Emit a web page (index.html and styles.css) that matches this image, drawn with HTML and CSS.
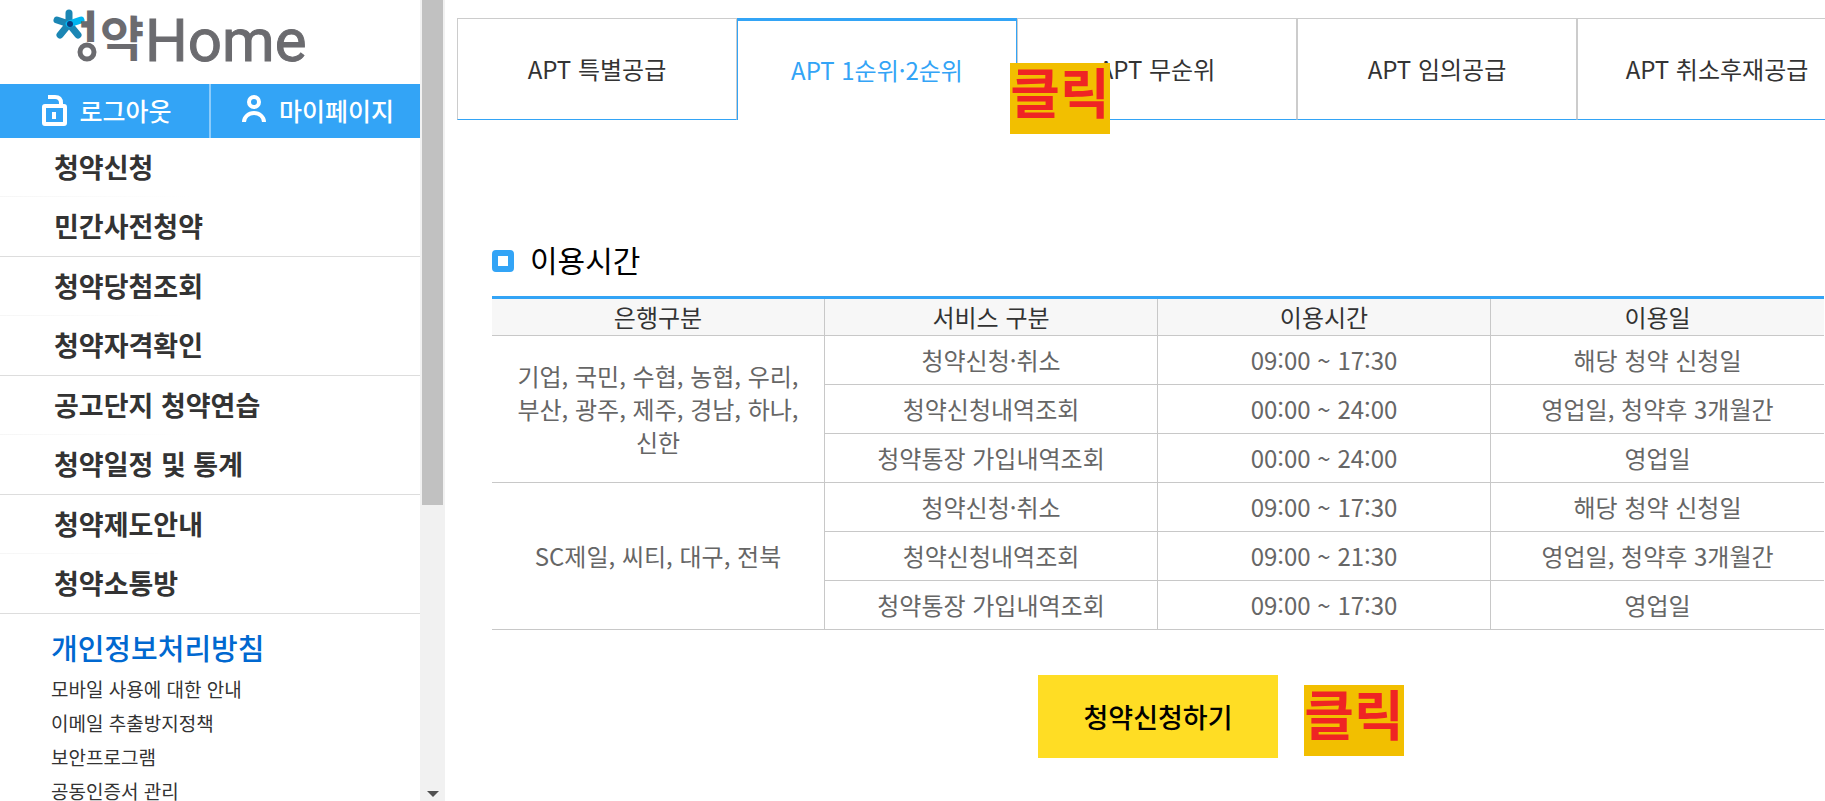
FILE: index.html
```
<!DOCTYPE html>
<html lang="ko">
<head>
    <meta charset="UTF-8">
    <meta name="viewport" content="width=device-width, initial-scale=1.0">
    <title>청약Home</title>
    <link rel="stylesheet" href="styles.css">
</head>
<body>
    <div class="sidebar">
        <a href="#" class="logo" aria-label="청약Home">
            <svg width="270" height="84" viewBox="0 0 270 84">
                <g fill="none" stroke-width="7" stroke-linecap="round">
                    <path stroke="#1b86b4" d="M17 24V13M17 24L5 20M17 24L8 35M17 24L26 35"/>
                    <path stroke="#00b5f0" d="M17 24L29 20"/>
                </g>
                <circle cx="18" cy="24" r="3" fill="#0b3c7d"/>
                <circle cx="35" cy="52" r="7" fill="none" stroke="#6b6b6f" stroke-width="5"/>
                <text class="logo-vowel" x="22" y="37">ㅓ</text>
                <text class="logo-korean" x="48" y="56">약</text>
                <text class="logo-home" x="93" y="61">Home</text>
            </svg>
        </a>
        <div class="user-menu">
            <a href="#">
                <svg width="26" height="32" viewBox="0 0 26 32" fill="none" stroke="#fff" stroke-width="4">
                    <rect x="3" y="12" width="21" height="18" rx="1"/>
                    <path d="M7 3h7q6 0 6 6v3"/>
                    <path d="M13 18v7"/>
                </svg>
                로그아웃
            </a>
            <a href="#">
                <svg width="26" height="32" viewBox="0 0 26 32" fill="none" stroke="#fff" stroke-width="4">
                    <circle cx="13" cy="8" r="5"/>
                    <path d="M3 28a10 9 0 0 1 20 0"/>
                </svg>
                마이페이지
            </a>
        </div>
        <nav>
            <ul class="main-menu">
                <li><a href="#">청약신청</a></li>
                <li><a href="#">민간사전청약</a></li>
                <li><a href="#">청약당첨조회</a></li>
                <li><a href="#">청약자격확인</a></li>
                <li><a href="#">공고단지 청약연습</a></li>
                <li><a href="#">청약일정 및 통계</a></li>
                <li><a href="#">청약제도안내</a></li>
                <li><a href="#">청약소통방</a></li>
            </ul>
        </nav>
        <ul class="policy-menu">
            <li><a href="#" class="privacy">개인정보처리방침</a></li>
            <li><a href="#">모바일 사용에 대한 안내</a></li>
            <li><a href="#">이메일 추출방지정책</a></li>
            <li><a href="#">보안프로그램</a></li>
            <li><a href="#">공동인증서 관리</a></li>
        </ul>
    </div>

    <div class="scrollbar">
        <div class="thumb"></div>
        <svg width="12" height="6" viewBox="0 0 12 6"><path fill="#505050" d="M0 0h12L6 6z"/></svg>
    </div>

    <main>
        <div class="tab-area">
            <ul class="tabs">
                <li><a href="#">APT 특별공급</a></li>
                <li><a href="#" class="active">APT 1순위·2순위</a></li>
                <li><a href="#">APT 무순위</a></li>
                <li><a href="#">APT 임의공급</a></li>
                <li><a href="#">APT 취소후재공급</a></li>
            </ul>
            <span class="click click-tab">클릭</span>
        </div>

        <section>
            <h2>이용시간</h2>
            <table>
                <thead>
                    <tr>
                        <th>은행구분</th>
                        <th>서비스 구분</th>
                        <th>이용시간</th>
                        <th>이용일</th>
                    </tr>
                </thead>
                <tbody>
                    <tr>
                        <td rowspan="3">기업, 국민, 수협, 농협, 우리, 부산, 광주, 제주, 경남, 하나, 신한</td>
                        <td>청약신청·취소</td>
                        <td>09:00 ~ 17:30</td>
                        <td>해당 청약 신청일</td>
                    </tr>
                    <tr>
                        <td>청약신청내역조회</td>
                        <td>00:00 ~ 24:00</td>
                        <td>영업일, 청약후 3개월간</td>
                    </tr>
                    <tr>
                        <td>청약통장 가입내역조회</td>
                        <td>00:00 ~ 24:00</td>
                        <td>영업일</td>
                    </tr>
                    <tr>
                        <td rowspan="3">SC제일, 씨티, 대구, 전북</td>
                        <td>청약신청·취소</td>
                        <td>09:00 ~ 17:30</td>
                        <td>해당 청약 신청일</td>
                    </tr>
                    <tr>
                        <td>청약신청내역조회</td>
                        <td>09:00 ~ 21:30</td>
                        <td>영업일, 청약후 3개월간</td>
                    </tr>
                    <tr>
                        <td>청약통장 가입내역조회</td>
                        <td>09:00 ~ 17:30</td>
                        <td>영업일</td>
                    </tr>
                </tbody>
            </table>
            <div class="apply">
                <button type="button">청약신청하기</button>
                <span class="click click-apply">클릭</span>
            </div>
        </section>
    </main>
</body>
</html>
```
FILE: styles.css
```
* {
    box-sizing: border-box;
}

body {
    display: flex;
    height: 100vh;
    margin: 0;
    overflow: hidden;
    background-color: #fff;
    color: #333;
    font-family: "Noto Sans CJK KR", sans-serif;
    font-size: 24px;
}

ul {
    list-style-type: none;
    margin: 0;
    padding: 0;
}

a {
    color: inherit;
    text-decoration: none;
}

/* sidebar */
.sidebar {
    flex: 0 0 420px;
    overflow: hidden;
}

.logo {
    display: block;
    height: 84px;
    padding-left: 52px;
}

.logo svg {
    display: block;
    overflow: visible;
}

.logo text {
    fill: #6b6b6f;
}

.logo-vowel {
    font-size: 30px;
    font-weight: bold;
    stroke: #6b6b6f;
    stroke-width: 3px;
}

.logo-korean {
    font-size: 48px;
    font-weight: bold;
}

.logo-home {
    font-family: Roboto, sans-serif;
    font-size: 60px;
    font-weight: 400;
    stroke: #6b6b6f;
    stroke-width: 1px;
}

.user-menu {
    display: flex;
    height: 54px;
    background-color: #33a4f6;
    color: #fff;
    font-size: 25px;
    font-weight: 500;
}

.user-menu a {
    flex: 1;
    display: flex;
    align-items: center;
    justify-content: center;
    gap: 12px;
    padding: 0 0 2px 4px;
}

.user-menu a:first-child {
    border-right: 2px solid #8ccbfa;
}

.main-menu a {
    display: block;
    padding: 0 0 2px 54px;
    font-size: 27px;
    font-weight: bold;
    line-height: 57px;
}

.main-menu li:nth-child(odd) {
    background: linear-gradient(to right, #f6f6f6, #fff 190px) bottom / 100% 1px no-repeat;
}

.main-menu li:nth-child(even) {
    border-bottom: 1px solid #ddd;
}

.policy-menu {
    padding: 9px 0 0 51px;
    font-size: 19px;
    line-height: 34px;
}

.policy-menu .privacy {
    color: #0068d0;
    font-size: 29px;
    font-weight: 500;
    line-height: 49px;
}

/* scrollbar */
.scrollbar {
    flex: 0 0 25px;
    display: flex;
    flex-direction: column;
    align-items: center;
    justify-content: space-between;
    background-color: #f1f1f1;
}

.scrollbar svg {
    margin-bottom: 4px;
}

.thumb {
    width: 21px;
    height: 63%;
    background-color: #c1c1c1;
}

/* content */
main {
    flex: 1;
    min-width: 0;
    padding-top: 18px;
}

.tab-area {
    position: relative;
    margin-left: 12px;
}

.tabs {
    display: flex;
    overflow: hidden;
}

.tabs li {
    flex: 0 0 280px;
}

.tabs a {
    display: block;
    height: 102px;
    border: 1px solid #ccc;
    border-bottom-color: #33a4f6;
    line-height: 100px;
    text-align: center;
}

.tabs .active {
    border: 1px solid #33a4f6;
    border-top-width: 3px;
    border-bottom: none;
    color: #33a4f6;
    line-height: 98px;
}

.click {
    position: absolute;
    width: 100px;
    height: 71px;
    background-color: #f2bf00;
    color: #ef2424;
    font-size: 54px;
    font-weight: bold;
    line-height: 56px;
    text-align: center;
}

.click-tab {
    top: 45px;
    left: 553px;
}

.click-apply {
    top: 10px;
    left: 100%;
    margin-left: 26px;
}

section {
    padding: 121px 1px 0 47px;
}

h2 {
    display: flex;
    align-items: center;
    gap: 16px;
    margin: 0 0 19px;
    color: #000;
    font-size: 30px;
    font-weight: normal;
    line-height: 36px;
}

h2::before {
    content: "";
    box-sizing: border-box;
    width: 22px;
    height: 22px;
    margin-top: 4px;
    border: 6px solid #33a4f6;
    border-radius: 4px;
}

table {
    width: 100%;
    border-top: 3px solid #33a4f6;
    border-spacing: 0;
    table-layout: fixed;
}

th,
td {
    padding: 0 24px;
    border-right: 1px solid #c8c8c8;
    border-bottom: 1px solid #c8c8c8;
    text-align: center;
    word-break: keep-all;
}

th {
    height: 37px;
    background-color: #f7f7f7;
    font-weight: normal;
    line-height: 36px;
}

td {
    height: 49px;
    padding-bottom: 2px;
    color: #666;
    line-height: 33px;
}

th:last-child,
td:last-child {
    border-right: none;
}

.apply {
    position: relative;
    width: 240px;
    margin: 45px auto 0;
}

.apply button {
    display: block;
    width: 100%;
    height: 83px;
    border: none;
    background-color: #ffdd24;
    color: #000;
    font-family: inherit;
    font-size: 27px;
    font-weight: 500;
    cursor: pointer;
}
```
